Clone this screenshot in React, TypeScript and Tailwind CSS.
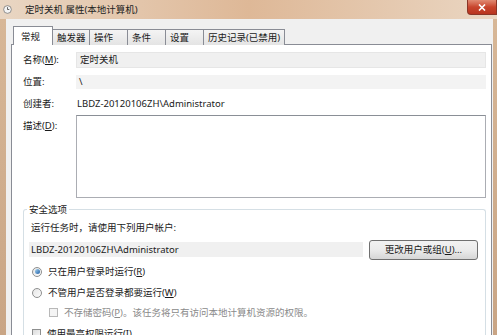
import React from "react";

const font = { fontFamily: '"Noto Sans", "Noto Sans CJK SC", sans-serif' };

function Radio({ checked }: { checked?: boolean }) {
  return (
    <span className="relative flex h-[10px] w-[10px] shrink-0 items-center justify-center rounded-full border border-[#8e8f8f] bg-gradient-to-br from-[#e6e6e6] to-[#fbfbfb]">
      {checked && (
        <span className="h-[5px] w-[5px] rounded-full bg-gradient-to-br from-[#a6d5f0] to-[#1f5fa6]" />
      )}
    </span>
  );
}

function Check({ disabled }: { disabled?: boolean }) {
  return (
    <span
      className={
        "block h-[9px] w-[9px] shrink-0 border " +
        (disabled ? "border-[#b8b8b8] bg-[#f4f4f4]" : "border-[#8e8f8f] bg-gradient-to-br from-[#dcdcdc] to-[#f8f8f8]")
      }
    />
  );
}

export default function App() {
  const tabs = ["触发器", "操作", "条件", "设置", "历史记录(已禁用)"];
  const tabW = ["w-[37px]", "w-[38px]", "w-[38px]", "w-[38px]", "w-[81px]"];
  return (
    <div
      className="relative h-[335px] w-[497px] overflow-hidden bg-gradient-to-b from-[#d8b898] to-[#c9a585] text-[9.5px] leading-none text-[#1a1a1a]"
      style={font}
    >
      {/* title bar */}
      <div className="flex h-[19px] items-center bg-gradient-to-r from-[#e9d6c3] via-[#deb897] to-[#ead6c2] pl-[3px]">
        <svg width="9" height="9" viewBox="0 0 10 10" className="mr-[13px]">
          <circle cx="5" cy="5" r="4.3" fill="#f4f4f4" stroke="#7a7a7a" strokeWidth="0.9" />
          <path d="M5 2.4V5h2" stroke="#444" strokeWidth="0.9" fill="none" />
        </svg>
        <span className="text-[9.5px] text-[#222]">定时关机 属性(本地计算机)</span>
      </div>
      <div className="absolute right-0 top-0 flex h-[15px] w-[30px] items-center justify-center rounded-bl-[4px] border border-t-0 border-[#8a3526] bg-gradient-to-b from-[#e08a72] via-[#c8452d] to-[#b8341e]">
        <svg width="8" height="7" viewBox="0 0 8 7">
          <path d="M1 0.5L7 6.5M7 0.5L1 6.5" stroke="#fff" strokeWidth="1.6" />
        </svg>
      </div>

      {/* client */}
      <div className="ml-[6px] mr-[4px] flex h-[316px] flex-col bg-[#f0f0f0] pl-[5px] pr-[1px] pt-[7px]">
        {/* tabs */}
        <div className="relative z-10 flex h-[19px] items-end pl-[2px]">
          <div className="flex h-[19px] w-[40px] items-start border border-b-0 border-[#898c95] bg-white pl-[7px] pt-[5px]">
            常规
          </div>
          {tabs.map((t, i) => (
            <div
              key={t}
              className={
                "flex h-[16px] items-start border border-b-0 border-l-0 border-[#898c95] bg-gradient-to-b from-[#f4f4f4] to-[#e4e4e4] pl-[4px] pt-[3px] " +
                tabW[i]
              }
            >
              {t}
            </div>
          ))}
        </div>
        {/* panel */}
        <div className="-mt-px flex w-[481px] flex-1 flex-col border border-b-0 border-[#898c95] bg-white pl-[11px] pr-[5px] pt-[7px]">
          <div className="flex h-[16px] items-center">
            <span className="w-[53px]">名称(<u>M</u>):</span>
            <div className="flex h-[16px] flex-1 items-center border border-[#e6e6e6] bg-[#f0f0f0] pl-[3px]">定时关机</div>
          </div>
          <div className="mt-[7px] flex h-[14px] items-center">
            <span className="w-[53px]">位置:</span>
            <div className="flex h-[14px] flex-1 items-center bg-[#f3f3f3] pl-[3px]">\</div>
          </div>
          <div className="mt-[8px] flex h-[14px] items-center">
            <span className="w-[53px]">创建者:</span>
            <div className="flex-1 pl-[1px]">LBDZ-20120106ZH\Administrator</div>
          </div>
          <div className="mt-[4px] flex">
            <span className="w-[53px] pt-[6px]">描述(<u>D</u>):</span>
            <div className="h-[83px] w-[410px] border border-[#abadb3] border-t-[#8a8f96] bg-white" />
          </div>

          {/* group box */}
          <div className="relative mt-[11px] flex w-[463px] flex-1 flex-col rounded-t-[3px] border border-b-0 border-[#d5dfe5] pl-[5px] pt-[13px]">
            <span className="absolute -top-[5px] left-[3px] bg-white px-[2px]">安全选项</span>
            <div className="pl-[2px]">运行任务时，请使用下列用户帐户:</div>
            <div className="mt-[7px] flex items-center">
              <div className="flex h-[15px] w-[334px] items-center bg-[#f0f0f0] pl-[2px]">LBDZ-20120106ZH\Administrator</div>
              <div className="ml-[6px] flex h-[20px] w-[109px] items-center justify-center rounded-[3px] border border-[#707070] bg-gradient-to-b from-[#f2f2f2] via-[#ebebeb] to-[#d6d6d6]">
                更改用户或组(<u>U</u>)...
              </div>
            </div>
            <div className="mt-[7px] flex items-center gap-[6px] pl-[3px]">
              <Radio checked />
              <span>只在用户登录时运行(<u>R</u>)</span>
            </div>
            <div className="mt-[11px] flex items-center gap-[6px] pl-[3px]">
              <Radio />
              <span>不管用户是否登录都要运行(<u>W</u>)</span>
            </div>
            <div className="mt-[10px] flex items-center gap-[6px] pl-[20px] text-[#8a8a8a]">
              <Check disabled />
              <span>不存储密码(<u>P</u>)。该任务将只有访问本地计算机资源的权限。</span>
            </div>
            <div className="mt-[12px] flex items-center gap-[6px] pl-[3px]">
              <Check />
              <span>使用最高权限运行(<u>I</u>)</span>
            </div>
          </div>
        </div>
      </div>
    </div>
  );
}
